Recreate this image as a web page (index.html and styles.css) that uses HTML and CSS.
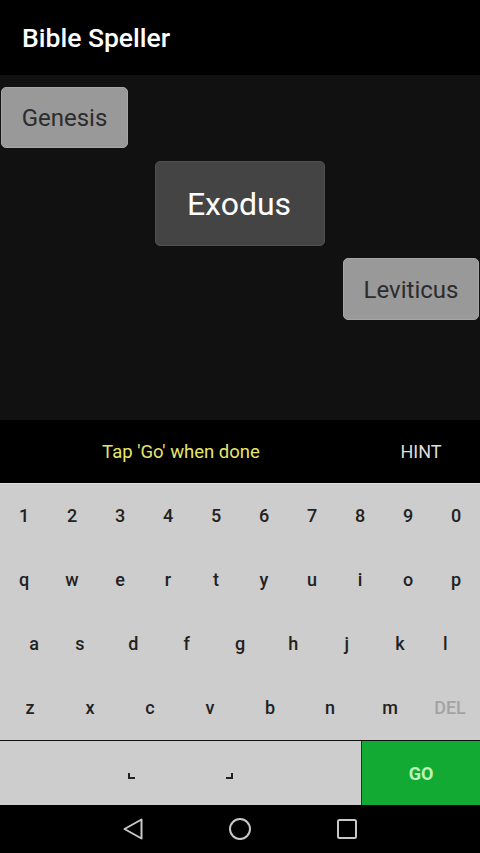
FILE: index.html
```html
<!DOCTYPE html>
<html>
<head>
<title>Bible Speller</title>
<link rel="stylesheet" href="styles.css">
</head>
<body>

<div class="app">
    <div class="app-bar">Bible Speller</div>

    <!-- Words spelled so far -->
    <div class="board">
        <div class="word word-left">Genesis</div>
        <div class="word word-current">Exodus</div>
        <div class="word word-right">Leviticus</div>
    </div>

    <div class="hint-bar">
        <div class="hint-text">Tap 'Go' when done</div>
        <div class="hint-btn">HINT</div>
    </div>

    <div class="keyboard">
        <div class="key-row row-10">
            <div class="key">1</div><div class="key">2</div><div class="key">3</div><div class="key">4</div><div class="key">5</div>
            <div class="key">6</div><div class="key">7</div><div class="key">8</div><div class="key">9</div><div class="key">0</div>
        </div>
        <div class="key-row row-10">
            <div class="key">q</div><div class="key">w</div><div class="key">e</div><div class="key">r</div><div class="key">t</div>
            <div class="key">y</div><div class="key">u</div><div class="key">i</div><div class="key">o</div><div class="key">p</div>
        </div>
        <div class="key-row row-9">
            <div class="key key-a">a</div><div class="key">s</div><div class="key">d</div><div class="key">f</div><div class="key">g</div>
            <div class="key">h</div><div class="key">j</div><div class="key">k</div><div class="key key-l">l</div>
        </div>
        <div class="key-row row-8">
            <div class="key">z</div><div class="key">x</div><div class="key">c</div><div class="key">v</div>
            <div class="key">b</div><div class="key">n</div><div class="key">m</div><div class="key key-del">DEL</div>
        </div>
        <div class="bottom-row">
            <div class="space-key">
                <span class="space-mark mark-left"></span>
                <span class="space-mark mark-right"></span>
            </div>
            <div class="go-key">GO</div>
        </div>
    </div>

    <!-- Android nav bar -->
    <div class="nav-bar">
        <svg class="nav-icon" width="24" height="26" viewBox="0 0 24 26">
            <path d="M20.5 3.5 V22.5 L3.5 13 Z" fill="none" stroke="#c8c8c8" stroke-width="2" stroke-linejoin="round"/>
        </svg>
        <svg class="nav-icon" width="24" height="26" viewBox="0 0 24 26">
            <circle cx="12" cy="13" r="10" fill="none" stroke="#c8c8c8" stroke-width="2"/>
        </svg>
        <svg class="nav-icon" width="24" height="26" viewBox="0 0 24 26">
            <rect x="3" y="4" width="18" height="18" rx="1.5" fill="none" stroke="#c8c8c8" stroke-width="2"/>
        </svg>
    </div>
</div>

</body>
</html>
```

FILE: styles.css
```css
* {
    box-sizing: border-box;
}

body {
    margin: 0;
    background-color: #000;
    font-family: Roboto, 'Liberation Sans', sans-serif;
}

.app {
    width: 480px;
    height: 853px;
    display: flex;
    flex-direction: column;
    overflow: hidden;
}

.app-bar {
    height: 75px;
    padding-left: 22px;
    display: flex;
    align-items: center;
    background-color: #000;
    color: #fff;
    font-size: 26.5px;
    font-weight: 500;
}

.board {
    height: 345px;
    padding: 12px 1px 0;
    display: flex;
    flex-direction: column;
    background-color: #111;
}

.word {
    display: flex;
    align-items: center;
    justify-content: center;
    border: 1px solid #a6a6a6;
    border-radius: 5px;
    background-color: #999;
    color: #2c2c2c;
    font-size: 24px;
}

.word-left {
    width: 127px;
    height: 61px;
    align-self: flex-start;
}

.word-current {
    width: 170px;
    height: 85px;
    margin: 13px 0 12px 154px;
    padding-right: 2px;
    align-self: flex-start;
    border-color: #505050;
    background-color: #444;
    color: #fff;
    font-size: 32px;
}

.word-right {
    width: 136px;
    height: 62px;
    padding-top: 2px;
    align-self: flex-end;
}

.hint-bar {
    height: 63px;
    display: flex;
    align-items: center;
    background-color: #000;
    font-size: 18.5px;
}

.hint-text {
    width: 362px;
    text-align: center;
    color: #e6e66e;
}

.hint-btn {
    width: 118px;
    text-align: center;
    color: #ddd;
    font-size: 18px;
}

.keyboard {
    height: 322px;
    background-color: #cdcdcd;
    border-top: 1px solid #ddd;
}

.key-row {
    height: 64px;
    display: grid;
}

.row-10 {
    grid-template-columns: repeat(10, 1fr);
}

.row-9 {
    grid-template-columns: repeat(9, 1fr);
}

.row-8 {
    grid-template-columns: repeat(8, 1fr);
}

.key {
    padding-bottom: 2px;
    display: flex;
    align-items: center;
    justify-content: center;
    color: #222;
    font-size: 18px;
    font-weight: 500;
}

.key-a {
    padding-left: 15px;
}

.key-l {
    padding-right: 16px;
}

.key-del {
    color: #a3a3a3;
}

.bottom-row {
    height: 65px;
    display: flex;
    border-top: 1.5px solid #111;
}

.space-key {
    width: 362px;
    padding-top: 6px;
    display: flex;
    align-items: center;
    justify-content: center;
    gap: 91px;
    border-right: 1px solid #1a3a1f;
}

.space-mark {
    width: 7px;
    height: 6px;
    border-bottom: 2px solid #222;
}

.mark-left {
    border-left: 2px solid #222;
}

.mark-right {
    border-right: 2px solid #222;
}

.go-key {
    flex: 1;
    display: flex;
    align-items: center;
    justify-content: center;
    background-color: #12aa33;
    color: #b8f5bc;
    font-size: 18px;
    font-weight: 700;
}

.nav-bar {
    height: 48px;
    padding-left: 121px;
    display: flex;
    align-items: center;
    gap: 83px;
    background-color: #000;
}
```
